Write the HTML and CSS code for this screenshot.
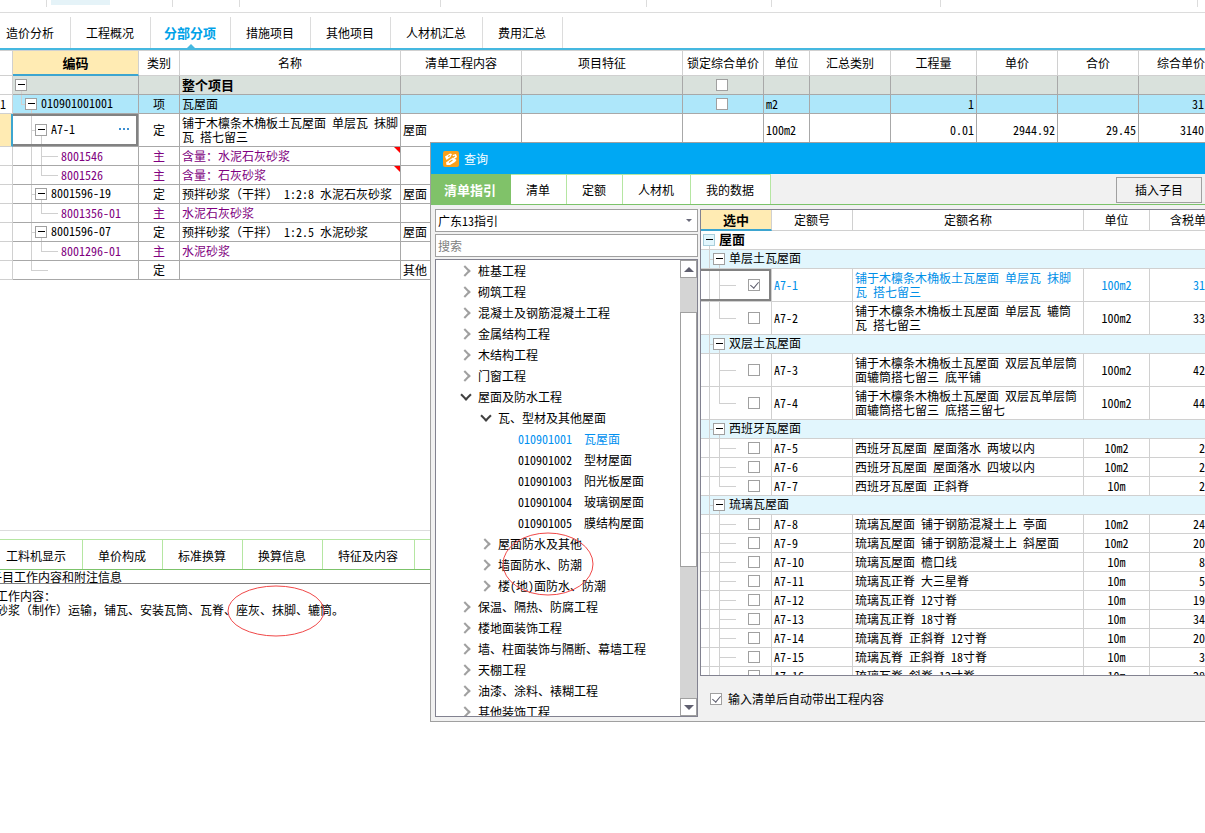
FILE: index.html
```html
<!DOCTYPE html>
<html lang="zh-CN">
<head>
<meta charset="utf-8">
<title>分部分项</title>
<link rel="stylesheet" href="styles.css">
</head>
<body>
<main class="app">
  <div class="ribbon">
    <span class="ribbon-group g-a"></span><span class="ribbon-group g-b"><i class="ribbon-hot"></i></span><span class="ribbon-group g-c"></span><span class="ribbon-group g-d"></span><span class="ribbon-group g-e"></span><span class="ribbon-group g-f"></span><span class="ribbon-group g-g"></span><span class="ribbon-group g-h"></span>
  </div>
  <nav class="tabs">
    <button class="tab first">造价分析</button><button class="tab">工程概况</button><button class="tab active">分部分项</button><button class="tab">措施项目</button><button class="tab">其他项目</button><button class="tab">人材机汇总</button><button class="tab">费用汇总</button>
  </nav>
  <section class="bill">
    <table class="grid main-grid">
      <colgroup><col class="m0"><col class="m1"><col class="m2"><col class="m3"><col class="m4"><col class="m5"><col class="m6"><col class="m7"><col class="m8"><col class="m9"><col class="m10"><col class="m11"><col></colgroup>
      <thead>
        <tr><th></th><th class="current">编码</th><th>类别</th><th>名称</th><th>清单工程内容</th><th>项目特征</th><th>锁定综合单价</th><th>单位</th><th>汇总类别</th><th>工程量</th><th>单价</th><th>合价</th><th class="cut">综合单价</th></tr>
      </thead>
      <tbody>
        <tr class="total"><td class="no"></td><td class="node n0"><button class="toggle" aria-label="折叠"></button></td><td></td><td class="bold">整个项目</td><td></td><td></td><td class="mid check"><input type="checkbox" aria-label="锁定整个项目"></td><td></td><td></td><td></td><td></td><td></td><td></td></tr>
        <tr class="item"><td class="no">1</td><td class="node n1"><button class="toggle" aria-label="折叠"></button>010901001001</td><td class="mid">项</td><td>瓦屋面</td><td></td><td></td><td class="mid check"><input type="checkbox" aria-label="锁定瓦屋面"></td><td>m2</td><td></td><td class="num">1</td><td></td><td></td><td class="num last">31</td></tr>
        <tr class="tall"><td class="no here"></td><td class="node n2 picked"><button class="toggle" aria-label="折叠"></button>A7-1<button class="more" aria-label="更多"><i></i><i></i><i></i></button></td><td class="mid">定</td><td>铺于木檩条木桷板土瓦屋面 单层瓦 抹脚瓦 搭七留三</td><td>屋面</td><td></td><td></td><td>100m2</td><td></td><td class="num">0.01</td><td class="num">2944.92</td><td class="num">29.45</td><td class="num last">3140</td></tr>
        <tr class="material"><td class="no"></td><td class="node n3">8001546</td><td class="mid">主</td><td class="noted">含量：水泥石灰砂浆</td><td></td><td></td><td></td><td></td><td></td><td></td><td></td><td></td><td></td></tr>
        <tr class="material"><td class="no"></td><td class="node n3 end">8001526</td><td class="mid">主</td><td class="noted">含量：石灰砂浆</td><td></td><td></td><td></td><td></td><td></td><td></td><td></td><td></td><td></td></tr>
        <tr><td class="no"></td><td class="node n2"><button class="toggle" aria-label="折叠"></button>8001596-19</td><td class="mid">定</td><td>预拌砂浆（干拌） 1:2:8 水泥石灰砂浆</td><td>屋面</td><td></td><td></td><td></td><td></td><td></td><td></td><td></td><td></td></tr>
        <tr class="material"><td class="no"></td><td class="node n3 end">8001356-01</td><td class="mid">主</td><td>水泥石灰砂浆</td><td></td><td></td><td></td><td></td><td></td><td></td><td></td><td></td><td></td></tr>
        <tr><td class="no"></td><td class="node n2"><button class="toggle" aria-label="折叠"></button>8001596-07</td><td class="mid">定</td><td>预拌砂浆（干拌） 1:2.5 水泥砂浆</td><td>屋面</td><td></td><td></td><td></td><td></td><td></td><td></td><td></td><td></td></tr>
        <tr class="material"><td class="no"></td><td class="node n3 end">8001296-01</td><td class="mid">主</td><td>水泥砂浆</td><td></td><td></td><td></td><td></td><td></td><td></td><td></td><td></td><td></td></tr>
        <tr><td class="no"></td><td class="node n2 end"></td><td class="mid">定</td><td></td><td>其他</td><td></td><td></td><td></td><td></td><td></td><td></td><td></td><td></td></tr>
      </tbody>
    </table>
  </section>
  <section class="detail">
    <nav class="tabs sub-tabs">
      <button class="tab first">工料机显示</button><button class="tab">单价构成</button><button class="tab">标准换算</button><button class="tab">换算信息</button><button class="tab">特征及内容</button>
    </nav>
    <h2 class="detail-title">子目工作内容和附注信息</h2>
    <div class="detail-text"><p>工作内容：</p><p>砂浆（制作）运输，铺瓦、安装瓦筒、瓦脊、座灰、抹脚、辘筒。</p></div>
  </section>
</main>

<section class="dialog" role="dialog" aria-label="查询">
  <header class="titlebar">
    <svg class="logo" width="16" height="16" viewBox="0 0 16 16"><rect width="16" height="16" rx="2" fill="#f9a01b"/><path d="M2 5.500 7 2.500 9 3 7.500 6 3.500 9z" fill="#fff"/><path d="M9.500 4 13 3 14 6 11.500 8z" fill="#fff"/><path d="M3 11.500 10 6.500 13.500 9 12 11 7 14 3.500 14z" fill="#fff"/><path d="M5 5.500 7 4.500M6 11.500 9.500 9M10 6 12 5" stroke="#f9a01b" stroke-width="1.200" fill="none"/></svg>
    <span>查询</span>
  </header>
  <div class="dialog-bar">
    <nav class="tabs dialog-tabs">
      <button class="tab active">清单指引</button><button class="tab">清单</button><button class="tab">定额</button><button class="tab">人材机</button><button class="tab">我的数据</button>
    </nav>
    <button class="insert">插入子目</button>
  </div>
  <div class="dialog-body">
    <div class="guide">
      <div class="select-box"><select aria-label="指引"><option>广东13指引</option></select></div>
      <input class="search" type="text" placeholder="搜索" aria-label="搜索">
      <div class="tree-box">
        <ul class="tree">
          <li class="branch">桩基工程</li>
          <li class="branch">砌筑工程</li>
          <li class="branch">混凝土及钢筋混凝土工程</li>
          <li class="branch">金属结构工程</li>
          <li class="branch">木结构工程</li>
          <li class="branch">门窗工程</li>
          <li class="branch open">屋面及防水工程</li>
          <li class="branch deep open">瓦、型材及其他屋面</li>
          <li class="leaf chosen">010901001  瓦屋面</li>
          <li class="leaf">010901002  型材屋面</li>
          <li class="leaf">010901003  阳光板屋面</li>
          <li class="leaf">010901004  玻璃钢屋面</li>
          <li class="leaf">010901005  膜结构屋面</li>
          <li class="branch deep">屋面防水及其他</li>
          <li class="branch deep">墙面防水、防潮</li>
          <li class="branch deep">楼(地)面防水、防潮</li>
          <li class="branch">保温、隔热、防腐工程</li>
          <li class="branch">楼地面装饰工程</li>
          <li class="branch">墙、柱面装饰与隔断、幕墙工程</li>
          <li class="branch">天棚工程</li>
          <li class="branch">油漆、涂料、裱糊工程</li>
          <li class="branch">其他装饰工程</li>
        </ul>
        <div class="scroll">
          <button class="scroll-btn up" aria-label="向上"></button>
          <div class="track"><div class="thumb"></div></div>
          <button class="scroll-btn down" aria-label="向下"></button>
        </div>
      </div>
    </div>
    <div class="result">
      <div class="result-box">
        <table class="grid quota-grid">
          <colgroup><col class="q0"><col class="q1"><col class="q2"><col class="q3"><col></colgroup>
          <thead><tr><th class="current">选中</th><th>定额号</th><th>定额名称</th><th>单位</th><th class="cut">含税单价</th></tr></thead>
          <tbody>
            <tr><td class="node n0 bold" colspan="5"><button class="toggle pale" aria-label="折叠"></button>屋面</td></tr>
            <tr class="group"><td class="node n1 more-groups" colspan="5"><button class="toggle" aria-label="折叠"></button>单层土瓦屋面</td></tr>
            <tr class="tall chosen"><td class="node leafcell picked"><input type="checkbox" checked aria-label="A7-1"></td><td>A7-1</td><td>铺于木檩条木桷板土瓦屋面 单层瓦 抹脚瓦 搭七留三</td><td class="mid">100m2</td><td class="num last">31</td></tr>
            <tr class="tall"><td class="node leafcell end"><input type="checkbox" aria-label="A7-2"></td><td>A7-2</td><td>铺于木檩条木桷板土瓦屋面 单层瓦 辘筒瓦 搭七留三</td><td class="mid">100m2</td><td class="num last">33</td></tr>
            <tr class="group"><td class="node n1 more-groups" colspan="5"><button class="toggle" aria-label="折叠"></button>双层土瓦屋面</td></tr>
            <tr class="tall"><td class="node leafcell"><input type="checkbox" aria-label="A7-3"></td><td>A7-3</td><td>铺于木檩条木桷板土瓦屋面 双层瓦单层筒面辘筒搭七留三 底平铺</td><td class="mid">100m2</td><td class="num last">42</td></tr>
            <tr class="tall"><td class="node leafcell end"><input type="checkbox" aria-label="A7-4"></td><td>A7-4</td><td>铺于木檩条木桷板土瓦屋面 双层瓦单层筒面辘筒搭七留三 底搭三留七</td><td class="mid">100m2</td><td class="num last">44</td></tr>
            <tr class="group"><td class="node n1 more-groups" colspan="5"><button class="toggle" aria-label="折叠"></button>西班牙瓦屋面</td></tr>
            <tr><td class="node leafcell"><input type="checkbox" aria-label="A7-5"></td><td>A7-5</td><td>西班牙瓦屋面 屋面落水 两坡以内</td><td class="mid">10m2</td><td class="num last">2</td></tr>
            <tr><td class="node leafcell"><input type="checkbox" aria-label="A7-6"></td><td>A7-6</td><td>西班牙瓦屋面 屋面落水 四坡以内</td><td class="mid">10m2</td><td class="num last">2</td></tr>
            <tr><td class="node leafcell end"><input type="checkbox" aria-label="A7-7"></td><td>A7-7</td><td>西班牙瓦屋面 正斜脊</td><td class="mid">10m</td><td class="num last">2</td></tr>
            <tr class="group"><td class="node n1 more-groups" colspan="5"><button class="toggle" aria-label="折叠"></button>琉璃瓦屋面</td></tr>
            <tr><td class="node leafcell"><input type="checkbox" aria-label="A7-8"></td><td>A7-8</td><td>琉璃瓦屋面 铺于钢筋混凝土上 亭面</td><td class="mid">10m2</td><td class="num last">24</td></tr>
            <tr><td class="node leafcell"><input type="checkbox" aria-label="A7-9"></td><td>A7-9</td><td>琉璃瓦屋面 铺于钢筋混凝土上 斜屋面</td><td class="mid">10m2</td><td class="num last">20</td></tr>
            <tr><td class="node leafcell"><input type="checkbox" aria-label="A7-10"></td><td>A7-10</td><td>琉璃瓦屋面 檐口线</td><td class="mid">10m</td><td class="num last">8</td></tr>
            <tr><td class="node leafcell"><input type="checkbox" aria-label="A7-11"></td><td>A7-11</td><td>琉璃瓦正脊 大三星脊</td><td class="mid">10m</td><td class="num last">5</td></tr>
            <tr><td class="node leafcell"><input type="checkbox" aria-label="A7-12"></td><td>A7-12</td><td>琉璃瓦正脊 12寸脊</td><td class="mid">10m</td><td class="num last">19</td></tr>
            <tr><td class="node leafcell"><input type="checkbox" aria-label="A7-13"></td><td>A7-13</td><td>琉璃瓦正脊 18寸脊</td><td class="mid">10m</td><td class="num last">34</td></tr>
            <tr><td class="node leafcell"><input type="checkbox" aria-label="A7-14"></td><td>A7-14</td><td>琉璃瓦脊 正斜脊 12寸脊</td><td class="mid">10m</td><td class="num last">20</td></tr>
            <tr><td class="node leafcell"><input type="checkbox" aria-label="A7-15"></td><td>A7-15</td><td>琉璃瓦脊 正斜脊 18寸脊</td><td class="mid">10m</td><td class="num last">3</td></tr>
            <tr><td class="node leafcell"><input type="checkbox" aria-label="A7-16"></td><td>A7-16</td><td>琉璃瓦脊 斜脊 12寸脊</td><td class="mid">10m</td><td class="num last">28</td></tr>
          </tbody>
        </table>
      </div>
      <label class="auto"><input type="checkbox" checked>输入清单后自动带出工程内容</label>
    </div>
  </div>
</section>

<svg class="ring ring-text" width="98" height="52" viewBox="0 0 98 52"><ellipse cx="49" cy="26" rx="48" ry="25"/></svg>
<svg class="ring ring-tree" width="92" height="65" viewBox="0 0 92 65"><ellipse cx="46" cy="32" rx="45" ry="31"/></svg>
</body>
</html>
```
FILE: styles.css
```css
* { box-sizing: border-box; }

body {
  margin: 0;
  background: #fff;
  color: #000;
  font: 12px/14px "Noto Sans Mono CJK SC", "Noto Sans CJK SC", "Liberation Sans", sans-serif;
}

button, input, select { font: inherit; color: inherit; margin: 0; padding: 0; border-radius: 0; }

.app { overflow: hidden; min-height: 100vh; }

/* ribbon */
.ribbon { display: flex; height: 13px; border-bottom: 1px solid #dcdcdc; }
.ribbon-group { height: 7px; border-right: 1px solid #dcdcdc; }
.ribbon-hot { display: block; width: 59px; height: 5px; margin-left: 4px; background: #e5f3f8; }
.g-a { width: 47px; }
.g-b { width: 126px; }
.g-c { width: 67px; }
.g-d { width: 201px; }
.g-e { width: 206px; }
.g-f { width: 125px; }
.g-g { width: 169px; }
.g-h { width: 257px; }

/* tabs */
.tabs { display: flex; padding-top: 4px; height: 37px; border-bottom: 2px solid #45b8e0; }
.tab {
  position: relative;
  background: none;
  border: 0;
  border-right: 1px solid #dcdcdc;
  padding: 0 16px 0 15px;
  white-space: nowrap;
}
.tab.first { padding: 0 16px 0 6px; }
.tab.active { padding: 0 14px 0 13px; font-size: 13px; font-weight: bold; color: #00a2e8; }
.app .tab.active::after {
  content: "";
  position: absolute;
  left: 36px;
  bottom: 0;
  border: 4px solid transparent;
  border-top: 0;
  border-bottom-color: #45b8e0;
}

/* grids */
.grid { width: 100%; table-layout: fixed; border-collapse: separate; border-spacing: 0; }
.grid th, .grid td {
  overflow: hidden;
  border-right: 1px solid #a8a8a8;
  border-bottom: 1px solid #a8a8a8;
}
.grid td { height: 19px; padding: 0 2px; white-space: nowrap; vertical-align: middle; }
.grid th { padding: 0; font-weight: normal; white-space: nowrap; border-color: #d0d0d0; }
.grid th.current {
  background: #ffebb3;
  border-bottom: 2px solid #3da5d0;
  font-size: 13px;
  font-weight: bold;
}
.grid th.cut { text-align: left; padding-left: 18px; }
.grid .tall td { height: 33px; white-space: normal; word-break: break-all; }
.grid .mid { text-align: center; }
.grid .check { padding-right: 4px; }
.grid .num { text-align: right; }
.grid .num.last { padding-right: 1px; }
.bold { font-size: 13px; font-weight: bold; }

.bill { min-height: 480px; border-top: 1px solid #d0d0d0; }
.main-grid th { height: 25px; }
.m0 { width: 13px; }
.m1 { width: 126px; }
.m2 { width: 41px; }
.m3 { width: 221px; }
.m4 { width: 121px; }
.m5 { width: 161px; }
.m6, .m8, .m10, .m11 { width: 81px; }
.m7 { width: 46px; }
.m9 { width: 86px; }

.total td { background-color: #d9e1dc; }
.item td { background-color: #aee7fa; }
.main-grid td.no { background: #fff; padding: 0; border-color: #d0d0d0; }
.main-grid td.here { background: #ffebb3; border-right: 2px solid #3da5d0; }
.material { color: #800080; }
.grid td.picked { box-shadow: inset -2px 0 #828282, inset 0 2px #828282, inset 0 -2px #828282; }
.noted { position: relative; }
.noted::after {
  content: "";
  position: absolute;
  right: 0;
  top: 0;
  border-top: 6px solid #f00;
  border-left: 6px solid transparent;
}

/* tree guides inside cells */
.node { --line: linear-gradient(#d0d0d0, #d0d0d0); background-repeat: no-repeat; }
.node .toggle { margin: 0 4px 2px 0; }
.node input[type="checkbox"], .check input[type="checkbox"] { margin-bottom: 2px; }
.grid .n0 { padding-left: 2px; background-image: var(--line); background-size: 1px 50%; background-position: 8px 100%; }
.grid .n1 {
  padding-left: 12px;
  background-image: var(--line), var(--line), var(--line);
  background-size: 1px 50%, 4px 1px, 1px 50%;
  background-position: 8px 0, 8px 50%, 18px 100%;
}
.grid .n1.more-groups { background-size: 1px 100%, 4px 1px, 1px 50%; }
.grid .n2 {
  padding-left: 22px;
  background-image: var(--line), var(--line), var(--line);
  background-size: 1px 100%, 4px 1px, 1px 50%;
  background-position: 18px 0, 18px 50%, 28px 100%;
}
.grid .n2.end { background-size: 1px 50%, 17px 1px, 0 0; }
.grid .n3 {
  padding-left: 48px;
  background-image: var(--line), var(--line), var(--line);
  background-size: 1px 100%, 1px 100%, 17px 1px;
  background-position: 18px 0, 28px 0, 28px 50%;
}
.grid .n3.end { background-size: 1px 100%, 1px 50%, 17px 1px; }
.grid .leafcell {
  padding-left: 47px;
  background-image: var(--line), var(--line), var(--line);
  background-size: 1px 100%, 1px 100%, 17px 1px;
  background-position: 8px 0, 18px 0, 18px 50%;
}
.grid .leafcell.end { background-size: 1px 100%, 1px 50%, 17px 1px; }

.toggle {
  width: 12px;
  height: 12px;
  border: 1px solid #a0a0a0;
  background: linear-gradient(#000, #000) center / 7px 1px no-repeat #fff;
  vertical-align: middle;
}
.toggle.pale { border-color: #a9cfdc; background-color: #e2f6fd; }
.more {
  display: inline-flex;
  gap: 2px;
  float: right;
  margin: 6px 7px 0 0;
  border: 0;
  background: none;
}
.more i { width: 2px; height: 2px; background: #3d8fd1; }

input[type="checkbox"] {
  appearance: none;
  position: relative;
  display: inline-block;
  width: 12px;
  height: 12px;
  border: 1px solid #a0a0a0;
  background: #fff;
  vertical-align: middle;
}
input[type="checkbox"]:checked::after {
  content: "";
  position: absolute;
  left: 3px;
  top: 0;
  width: 4px;
  height: 7px;
  border: solid #5a5a6a;
  border-width: 0 1px 1px 0;
  transform: rotate(40deg);
}

/* detail panel */
.detail { border-top: 1px solid #dcdcdc; padding-top: 8px; }
.sub-tabs { height: 31px; padding-top: 2px; border-top: 1px solid #b5e6a2; border-bottom: 1px solid #7cc36a; }
.sub-tabs .tab { border-color: #b5e6a2; margin-top: -2px; padding-top: 2px; }
.detail-title {
  margin: 0;
  height: 14px;
  border-bottom: 1px solid #808080;
  font-size: 12px;
  font-weight: normal;
  text-indent: -10px;
}
.detail-text { padding-top: 5px; text-indent: -4px; white-space: nowrap; }
.detail-text p { margin: 0; }

/* query dialog */
.dialog {
  position: absolute;
  left: 430px;
  right: 0;
  top: 142px;
  height: 580px;
  display: flex;
  flex-direction: column;
  overflow: hidden;
  background: #f1f1f1;
  border: 1px solid #a0a0a0;
  border-right: 0;
}
.titlebar {
  flex: none;
  display: flex;
  align-items: center;
  gap: 5px;
  height: 31px;
  padding-left: 12px;
  background: #00a8f3;
  color: #fff;
}
.dialog-bar {
  flex: none;
  display: flex;
  justify-content: space-between;
  align-items: flex-start;
  height: 31px;
  border-bottom: 1px solid #7cc36a;
}
.dialog-tabs { height: 30px; padding: 0; border: 0; }
.dialog-tabs .tab { background: #fff; border-top: 1px solid #b5e6a2; border-color: #b5e6a2; }
.dialog-tabs .tab.active { background: #80c269; border-color: #80c269; color: #fff; }
.insert { width: 86px; height: 26px; margin: 3px 3px 0 0; border: 1px solid #a0a0a0; background: #f1f1f1; }

.dialog-body { flex: 1; min-height: 0; display: flex; gap: 2px; padding: 4px 0 4px 4px; }
.guide { flex: none; width: 263px; display: flex; flex-direction: column; gap: 2px; }
.select-box { position: relative; }
.select-box::after {
  content: "";
  position: absolute;
  right: 6px;
  top: 10px;
  border: 3px solid transparent;
  border-top-color: #6a6a7a;
  border-bottom: 0;
}
.select-box select, .search {
  display: block;
  appearance: none;
  width: 100%;
  height: 23px;
  border: 1px solid #a0a0a0;
  background: #fff;
  padding: 0 2px;
}
.search::placeholder { color: #808080; opacity: 1; }
.tree-box { flex: 1; min-height: 0; display: flex; border: 1px solid #828290; background: #fff; overflow: hidden; }
.tree { flex: 1; margin: 0; padding: 0; list-style: none; }
.tree li { position: relative; line-height: 21px; white-space: pre; }
.branch { padding-left: 42px; }
.branch.deep { padding-left: 62px; }
.leaf { padding-left: 82px; }
.tree .chosen { color: #0090f0; }
.branch::before {
  content: "";
  position: absolute;
  left: 25px;
  top: 7px;
  width: 6px;
  height: 6px;
  border: solid #a0a0a0;
  border-width: 2px 2px 0 0;
  transform: rotate(45deg);
}
.branch.deep::before { left: 45px; }
.branch.open::before { border-color: #404040; top: 5px; left: 26px; transform: rotate(135deg); }
.branch.deep.open::before { left: 46px; }
.scroll { flex: none; width: 17px; display: flex; flex-direction: column; background: #d4d4d4; }
.scroll-btn { width: 17px; height: 18px; border: 1px solid #a0a0a0; background: #fff; display: flex; align-items: center; justify-content: center; }
.scroll-btn::before { content: ""; border: 5px solid transparent; }
.up::before { border-top: 0; border-bottom-color: #606070; }
.down::before { border-bottom: 0; border-top-color: #606070; }
.track { flex: 1; padding-top: 34px; }
.thumb { height: 66%; border: 1px solid #a0a0a0; background: #fff; }

.result { flex: 1; min-width: 0; display: flex; flex-direction: column; }
.result-box { flex: 1; min-height: 0; overflow: hidden; border: 1px solid #828290; border-right: 0; background: #fff; }
.quota-grid th { height: 21px; }
.quota-grid td { border-color: #d0d0d0; }
.q0 { width: 71px; }
.q1 { width: 81px; }
.q2 { width: 231px; }
.q3 { width: 66px; }
.group td { background-color: #e2f6fd; }
.quota-grid .chosen { color: #0090e8; }
.grid tr > :last-child { border-right: 0; }
.quota-grid .num.last { padding-right: 0; }
.quota-grid th.cut { padding-left: 20px; }
.auto { flex: none; display: flex; align-items: center; gap: 6px; height: 41px; padding: 4px 0 0 10px; }

/* hand-drawn marks */
.ring { position: absolute; fill: none; stroke: #f04848; stroke-width: 1; }
.ring-text { left: 227px; top: 585px; }
.ring-tree { left: 502px; top: 532px; }
```
